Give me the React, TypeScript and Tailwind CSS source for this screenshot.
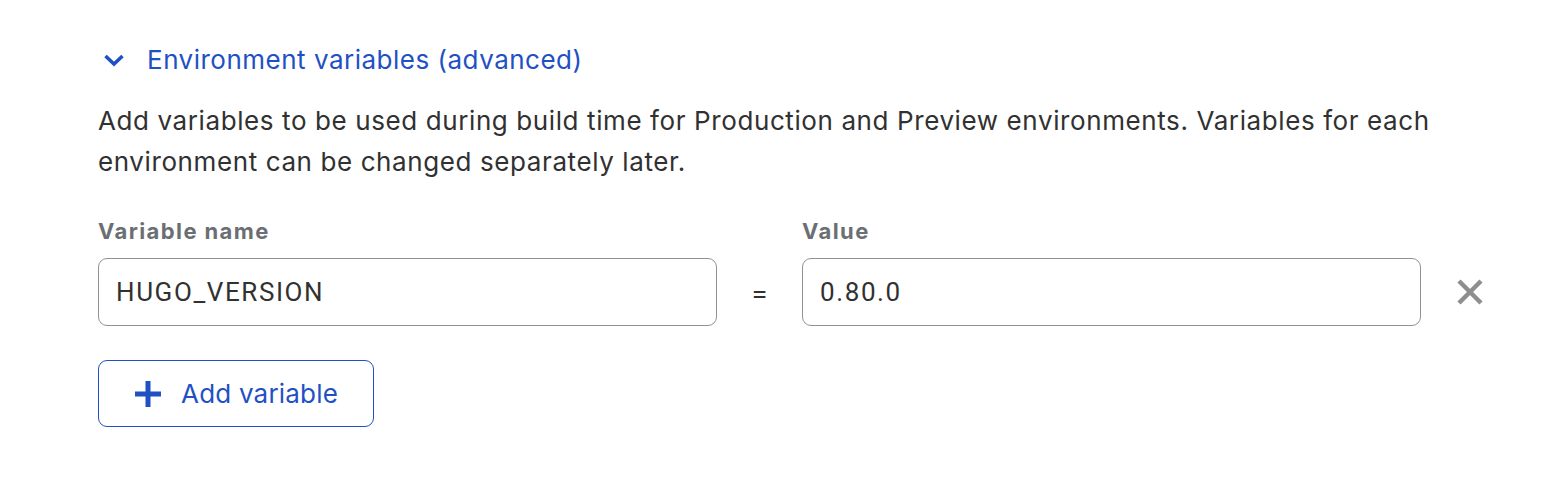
import React from "react";

export default function App() {
  return (
    <div
      className="w-[1564px] h-[502px] bg-white text-[#313131]"
      style={{ fontFamily: "Inter, 'Noto Sans', sans-serif" }}
    >
      <div className="pl-[98px] pt-[42px]">
        <button className="flex items-center text-[#1f51c4] text-[26px] leading-[36px] tracking-[0.5px]">
          <svg width="22" height="14" viewBox="0 0 22 14" className="ml-[5px] mr-[22px]">
            <path d="M2.5 3 L11 11 L19.5 3" fill="none" stroke="#1f51c4" strokeWidth="3.6" strokeLinecap="butt" strokeLinejoin="miter" />
          </svg>
          <span>Environment variables (advanced)</span>
        </button>
        <p className="mt-[22px] w-[1400px] text-[26px] leading-[41px] tracking-[0.6px] text-[#313131]">
          Add variables to be used during build time for Production and Preview environments. Variables for each environment can be changed separately later.
        </p>
        <div className="mt-[35px] flex items-end">
          <div className="flex flex-col">
            <label className="text-[22px] leading-[28px] font-bold tracking-[1.4px] text-[#6b6e73]">Variable name</label>
            <div
              className="mt-[13px] w-[619px] h-[68px] rounded-[9px] border-[1.5px] border-[#8f9297] flex items-center pl-[17px] text-[26px] tracking-[1.6px] text-[#313131]"
              style={{ fontFamily: "Roboto, 'Noto Sans', sans-serif" }}
            >
              HUGO_VERSION
            </div>
          </div>
          <div className="w-[85px] h-[68px] flex items-center justify-center text-[26px] text-[#313131]">=</div>
          <div className="flex flex-col">
            <label className="text-[22px] leading-[28px] font-bold tracking-[1.4px] text-[#6b6e73]">Value</label>
            <div
              className="mt-[13px] w-[619px] h-[68px] rounded-[9px] border-[1.5px] border-[#8f9297] flex items-center pl-[17px] text-[26px] tracking-[1.6px] text-[#313131]"
              style={{ fontFamily: "Roboto, 'Noto Sans', sans-serif" }}
            >
              0.80.0
            </div>
          </div>
          <div className="h-[68px] flex items-center ml-[36px]">
            <svg width="26" height="26" viewBox="0 0 26 26">
              <path d="M2 2 L24 24 M24 2 L2 24" stroke="#8e8e8e" strokeWidth="4.5" fill="none" />
            </svg>
          </div>
        </div>
        <button className="mt-[34px] h-[67px] w-[276px] rounded-[9px] border-[1.5px] border-[#1f51c4] flex items-center text-[#1f51c4] text-[26px] tracking-[0.2px]">
          <svg width="28" height="28" viewBox="0 0 28 28" className="ml-[35px] mr-[19px]">
            <path d="M14 1 V27 M1 14 H27" stroke="#1f51c4" strokeWidth="5" fill="none" />
          </svg>
          <span>Add variable</span>
        </button>
      </div>
    </div>
  );
}
